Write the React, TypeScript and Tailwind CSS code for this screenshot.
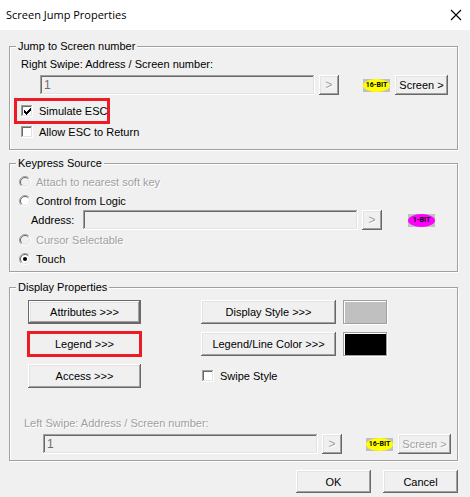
import React, { useState } from 'react';

const raised =
  'shadow-[inset_-1px_-1px_0_#696969,inset_1px_1px_0_#ffffff,inset_-2px_-2px_0_#a0a0a0,inset_2px_2px_0_#e3e3e3]';
const sunken =
  'shadow-[inset_-1px_-1px_0_#ffffff,inset_1px_1px_0_#a0a0a0,inset_-2px_-2px_0_#e3e3e3,inset_2px_2px_0_#696969]';
const etched = 'border border-[#a0a0a0] shadow-[1px_1px_0_#ffffff,inset_1px_1px_0_#ffffff]';
const disabledText = 'text-[#a0a0a0] [text-shadow:1px_1px_0_#ffffff]';

type ButtonProps = {
  children: React.ReactNode;
  className?: string;
  disabled?: boolean;
  label?: string;
};

const BevelButton = ({ children, className = '', disabled, label }: ButtonProps) => (
  <button
    type="button"
    disabled={disabled}
    aria-label={label}
    className={`flex shrink-0 items-center justify-center whitespace-nowrap bg-[#f0f0f0] ${raised} ${
      disabled ? disabledText : ''
    } ${className}`}
  >
    {children}
  </button>
);

const Group = ({ title, className = '', children }: { title: string; className?: string; children: React.ReactNode }) => (
  <fieldset className={`min-w-0 ${etched} ${className}`}>
    <legend className="ml-1.5 bg-[#f0f0f0] px-0.5">{title}</legend>
    {children}
  </fieldset>
);

const BitBadge = ({ text, className }: { text: string; className: string }) => (
  <span className="flex h-[13px] w-[27px] shrink-0 bg-[#c0c0c0]">
    <span
      className={`flex flex-1 items-center justify-center rounded-[50%] font-['Roboto',sans-serif] text-[7px] leading-none font-bold whitespace-nowrap ${className}`}
    >
      {text}
    </span>
  </span>
);

const Checkbox = ({ label, defaultChecked }: { label: string; defaultChecked?: boolean }) => (
  <label className="flex items-center gap-1.5 whitespace-nowrap">
    <span className="grid">
      <input
        type="checkbox"
        defaultChecked={defaultChecked}
        className={`peer col-start-1 row-start-1 size-3 appearance-none bg-white ${sunken}`}
      />
      <svg
        viewBox="0 0 12 12"
        shapeRendering="crispEdges"
        className="pointer-events-none invisible col-start-1 row-start-1 size-3 peer-checked:visible"
      >
        <path d="M3 5h1v3h-1zM4 6h1v3h-1zM5 7h1v3h-1zM6 6h1v3h-1zM7 5h1v3h-1zM8 4h1v3h-1zM9 3h1v3h-1z" />
      </svg>
    </span>
    {label}
  </label>
);

type RadioProps = {
  label: string;
  checked?: boolean;
  disabled?: boolean;
  onSelect?: () => void;
};

const Radio = ({ label, checked = false, disabled, onSelect }: RadioProps) => (
  <label className={`flex h-[19px] items-center gap-[5px] pl-[9px] ${disabled ? disabledText : ''}`}>
    <span className="grid">
      <input
        type="radio"
        name="keypress"
        checked={checked}
        disabled={disabled}
        onChange={onSelect}
        className="col-start-1 row-start-1 size-3 appearance-none rounded-full"
      />
      <svg viewBox="0 0 12 12" className="pointer-events-none col-start-1 row-start-1 size-3">
        <circle cx="6" cy="6" r="4.5" fill={disabled ? '#f0f0f0' : '#ffffff'} />
        <path d="M2.1 9.9A5.5 5.5 0 0 1 9.9 2.1" fill="none" stroke="#a0a0a0" />
        <path d="M2.8 9.2A4.5 4.5 0 0 1 9.2 2.8" fill="none" stroke="#696969" />
        <path d="M9.9 2.1A5.5 5.5 0 0 1 2.1 9.9" fill="none" stroke="#ffffff" />
        <path d="M9.2 2.8A4.5 4.5 0 0 1 2.8 9.2" fill="none" stroke="#e3e3e3" />
        {checked && <circle cx="6" cy="6" r="2" fill="#000000" />}
      </svg>
    </span>
    {label}
  </label>
);

type AddressRowProps = {
  id: string;
  className: string;
  screenDisabled?: boolean;
};

const AddressRow = ({ id, className, screenDisabled }: AddressRowProps) => (
  <div className={`mt-1 flex items-center ${className}`}>
    <input
      id={id}
      type="text"
      disabled
      defaultValue="1"
      className={`h-5 min-w-0 flex-1 px-1 text-[12px] text-[#6d6d6d] ${sunken}`}
    />
    <BevelButton disabled label="Browse address" className="ml-1 size-5 text-[12px]">
      &gt;
    </BevelButton>
    <span className="ml-6 flex">
      <BitBadge text="16-BIT" className="bg-[#ffff00]" />
    </span>
    <BevelButton disabled={screenDisabled} className="ml-[5px] h-5 w-[53px]">
      Screen &gt;
    </BevelButton>
  </div>
);

const Swatch = ({ className }: { className: string }) => (
  <span className={`h-6 w-11 border border-[#a0a0a0] shadow-[1px_1px_0_#ffffff,inset_1px_1px_0_#ffffff] ${className}`} />
);

export default function App() {
  const [source, setSource] = useState('touch');

  return (
    <div className="min-h-screen bg-[#f0f0f0] font-['Liberation_Sans',Arial,sans-serif] text-[11px] leading-[14px] text-black">
      <header className="flex h-[30px] items-center justify-between bg-white pr-2 pl-1.5">
        <h1 className="font-['Open_Sans',sans-serif] text-[11px]">Screen Jump Properties</h1>
        <button type="button" aria-label="Close" className="flex size-3 items-center justify-center">
          <svg viewBox="0 0 12 12" className="size-3" fill="none" stroke="#000000" strokeWidth="1.1">
            <path d="M1 1l10 10M11 1L1 11" />
          </svg>
        </button>
      </header>

      <main className="pt-[9px] pr-3 pb-1 pl-[9px]">
        <Group title="Jump to Screen number" className="pb-[10px]">
          <label htmlFor="right-swipe" className="mt-1 block pl-[11px]">
            Right Swipe: Address / Screen number:
          </label>
          <AddressRow id="right-swipe" className="pr-[9px] pl-[30px]" />
          <div className="mt-[3px] ml-1 flex h-[26px] w-fit items-center border-[3px] border-[#ed1c24] pl-1">
            <Checkbox label="Simulate ESC" defaultChecked />
          </div>
          <div className="mt-px flex pl-[11px]">
            <Checkbox label="Allow ESC to Return" />
          </div>
        </Group>

        <Group title="Keypress Source" className="mt-1.5 pt-0.5 pb-[3px]">
          <Radio label="Attach to nearest soft key" disabled />
          <Radio label="Control from Logic" checked={source === 'logic'} onSelect={() => setSource('logic')} />
          <div className="flex items-center pr-[22px] pl-[21px]">
            <label htmlFor="logic-address" className="w-[52px]">
              Address:
            </label>
            <input id="logic-address" type="text" disabled className={`h-5 min-w-0 flex-1 px-1 ${sunken}`} />
            <BevelButton disabled label="Browse logic address" className="mr-[26px] ml-1 size-5 text-[12px]">
              &gt;
            </BevelButton>
            <BitBadge text="1-BIT" className="bg-[#ff00ff]" />
          </div>
          <Radio label="Cursor Selectable" disabled />
          <Radio label="Touch" checked={source === 'touch'} onSelect={() => setSource('touch')} />
        </Group>

        <Group title="Display Properties" className="mt-2 pb-1.5">
          <div className="mt-1.5 flex gap-[60px] pl-[18px]">
            <div className="flex w-[113px] flex-col gap-2">
              <div className="flex flex-col border border-[#696969]">
                <BevelButton className="h-[22px]">Attributes &gt;&gt;&gt;</BevelButton>
              </div>
              <BevelButton className="h-6 outline-[3px] -outline-offset-2 outline-[#ed1c24]">
                Legend &gt;&gt;&gt;
              </BevelButton>
              <BevelButton className="h-6">Access &gt;&gt;&gt;</BevelButton>
            </div>
            <div className="flex flex-col gap-2">
              <div className="flex gap-[7px]">
                <BevelButton className="h-6 w-[135px]">Display Style &gt;&gt;&gt;</BevelButton>
                <Swatch className="bg-[#c0c0c0]" />
              </div>
              <div className="flex gap-[7px]">
                <BevelButton className="h-6 w-[135px]">Legend/Line Color &gt;&gt;&gt;</BevelButton>
                <Swatch className="bg-black" />
              </div>
              <div className="flex h-6 pl-px">
                <Checkbox label="Swipe Style" />
              </div>
            </div>
          </div>
          <label htmlFor="left-swipe" className={`mt-7 block pl-[14px] ${disabledText}`}>
            Left Swipe: Address / Screen number:
          </label>
          <AddressRow id="left-swipe" className="pr-1.5 pl-[33px]" screenDisabled />
        </Group>

        <footer className="mt-[9px] flex justify-end gap-3">
          <BevelButton className="h-[23px] w-[75px]">OK</BevelButton>
          <BevelButton className="h-[23px] w-[75px]">Cancel</BevelButton>
        </footer>
      </main>
    </div>
  );
}
